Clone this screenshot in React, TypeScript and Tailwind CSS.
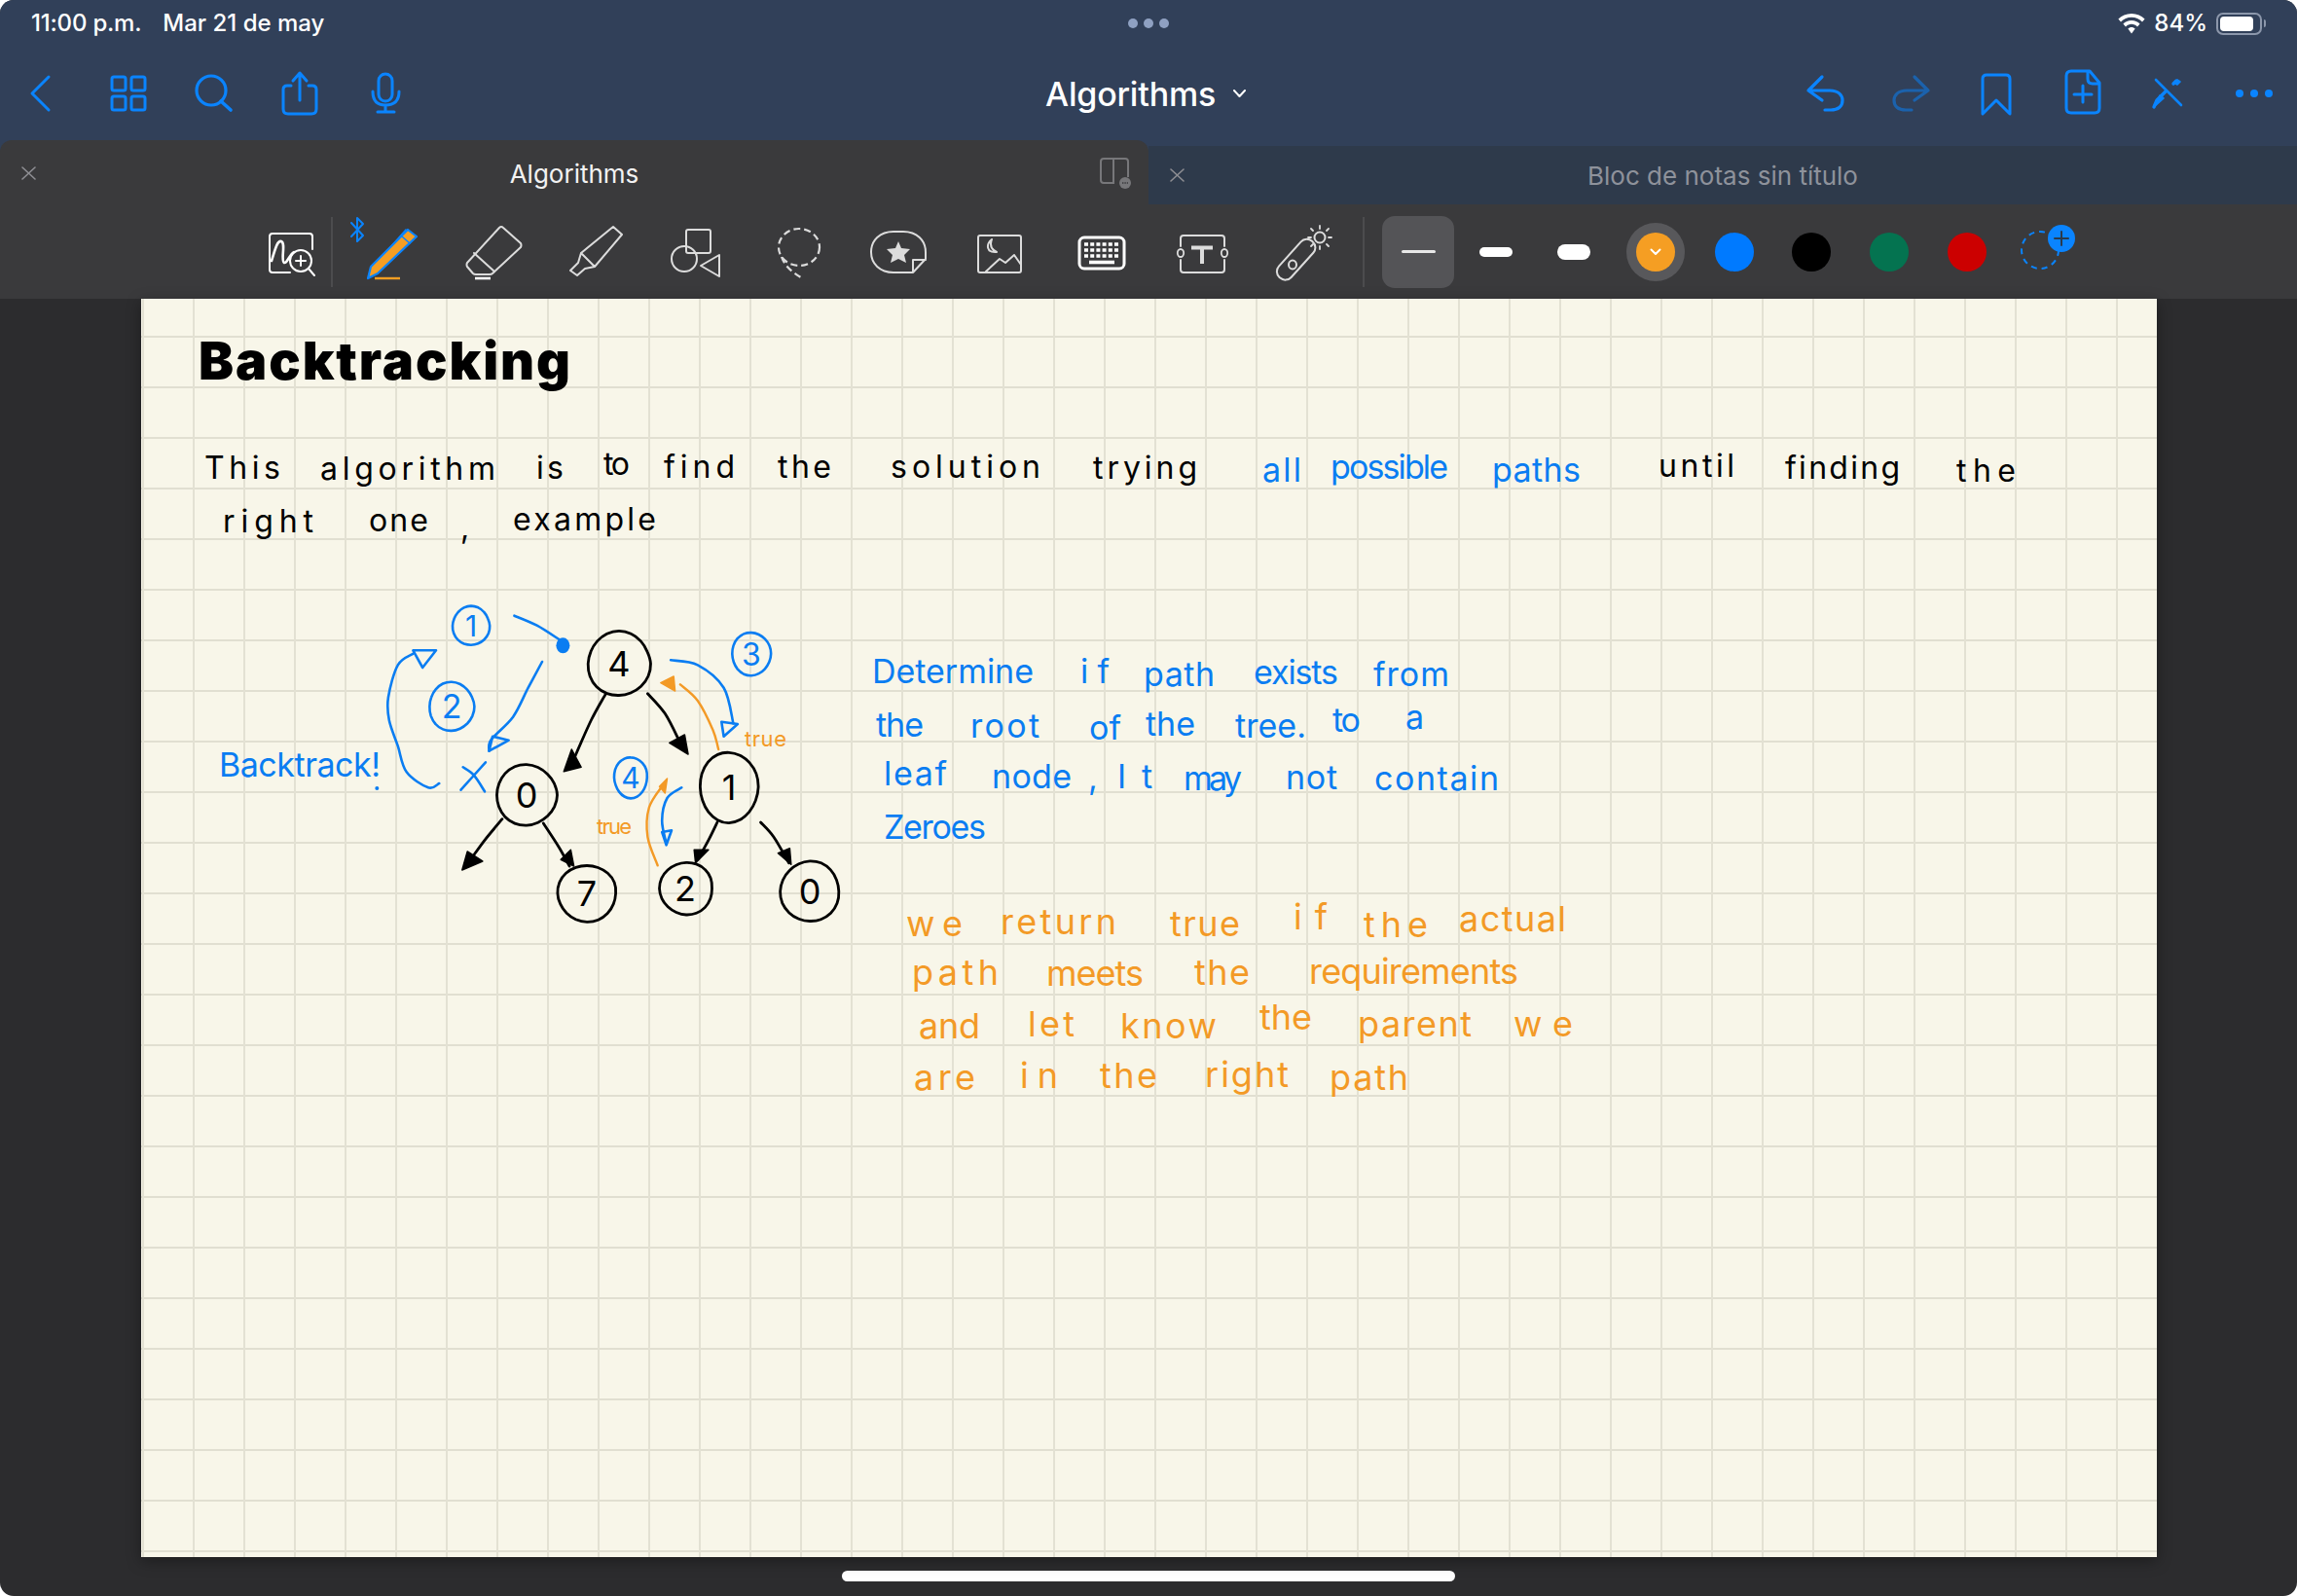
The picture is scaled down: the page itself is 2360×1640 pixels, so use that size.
import React from "react";

const BLUE = "#0a84ff";
const INK_BLUE = "#0a7df2";
const INK_ORANGE = "#f39a26";
const LIGHT = "#dcdcdc";

type Pt = [number, number];
const Z = (X: number, Y: number): Pt => [190 + X / 2.24, 600 + Y / 3];
const zp = (a: number[][]): Pt[] => a.map(([x, y]) => Z(x, y));

function smooth(pts: Pt[], closed = false): string {
  const n = pts.length;
  const g = (i: number) => (closed ? pts[(i + n) % n] : pts[Math.max(0, Math.min(n - 1, i))]);
  let d = `M${pts[0][0].toFixed(1)} ${pts[0][1].toFixed(1)}`;
  const last = closed ? n : n - 1;
  for (let i = 0; i < last; i++) {
    const p0 = g(i - 1), p1 = g(i), p2 = g(i + 1), p3 = g(i + 2);
    const c1 = [p1[0] + (p2[0] - p0[0]) / 6, p1[1] + (p2[1] - p0[1]) / 6];
    const c2 = [p2[0] - (p3[0] - p1[0]) / 6, p2[1] - (p3[1] - p1[1]) / 6];
    d += `C${c1[0].toFixed(1)} ${c1[1].toFixed(1)} ${c2[0].toFixed(1)} ${c2[1].toFixed(1)} ${p2[0].toFixed(1)} ${p2[1].toFixed(1)}`;
  }
  return d + (closed ? "Z" : "");
}

function blob(cx: number, cy: number, rx: number, ry: number, seed: number): string {
  const pts: Pt[] = [];
  for (let i = 0; i < 16; i++) {
    const a = (i / 16) * Math.PI * 2;
    const w = 1 + Math.sin(i * 1.1 + seed) * 0.018;
    pts.push([cx + Math.cos(a) * rx * w, cy + Math.sin(a) * ry * w]);
  }
  return smooth(pts, true);
}

type Word = [string, number, number, number];

const BLACK_WORDS: Word[] = [
  ["This", 210, 288, 492],
  ["algorithm", 329, 509, 493],
  ["is", 551, 579, 492],
  ["to", 620, 647, 488],
  ["find", 682, 755, 491],
  ["the", 799, 854, 491],
  ["solution", 915, 1069, 491],
  ["trying", 1123, 1230, 492],
  ["until", 1704, 1782, 490],
  ["finding", 1834, 1952, 492],
  ["the", 2010, 2071, 495],
  ["right", 229, 322, 547],
  ["one", 379, 440, 546],
  [",", 473, 481, 553],
  ["example", 527, 674, 545],
];
const BLUE_WORDS: Word[] = [
  ["all", 1297, 1337, 495],
  ["possible", 1367, 1488, 492],
  ["paths", 1533, 1624, 495],
  ["Determine", 896, 1062, 702],
  ["if", 1110, 1140, 702],
  ["path", 1175, 1248, 705],
  ["exists", 1288, 1375, 703],
  ["from", 1411, 1489, 705],
  ["the", 900, 949, 757],
  ["root", 997, 1068, 758],
  ["of", 1119, 1152, 760],
  ["the", 1177, 1228, 756],
  ["tree.", 1269, 1342, 758],
  ["to", 1369, 1398, 752],
  ["a", 1444, 1466, 749],
  ["leaf", 908, 973, 807],
  ["node", 1019, 1101, 810],
  [",", 1118, 1125, 811],
  ["It", 1148, 1184, 810],
  ["may", 1216, 1276, 812],
  ["not", 1321, 1374, 811],
  ["contain", 1412, 1540, 812],
  ["Zeroes", 908, 1013, 862],
  ["Backtrack!", 225, 391, 798],
];
const ORANGE_WORDS: Word[] = [
  ["we", 931, 989, 962],
  ["return", 1028, 1147, 960],
  ["true", 1202, 1274, 962],
  ["if", 1329, 1364, 955],
  ["the", 1401, 1467, 963],
  ["actual", 1499, 1609, 957],
  ["path", 937, 1026, 1012],
  ["meets", 1075, 1175, 1013],
  ["the", 1227, 1284, 1012],
  ["requirements", 1345, 1560, 1011],
  ["and", 944, 1007, 1067],
  ["let", 1056, 1104, 1065],
  ["know", 1151, 1250, 1067],
  ["the", 1294, 1348, 1058],
  ["parent", 1395, 1512, 1065],
  ["we", 1555, 1616, 1065],
  ["are", 939, 1002, 1120],
  ["in", 1048, 1087, 1118],
  ["the", 1130, 1189, 1118],
  ["right", 1238, 1324, 1117],
  ["path", 1366, 1447, 1120],
];

function Words({ words, fill, size }: { words: Word[]; fill: string; size: number }) {
  return (
    <>
      {words.map(([t, x0, x1, y], i) => (
        <text key={i} x={x0} y={y} fill={fill} fontSize={size} fontWeight={400} textLength={x1 - x0} lengthAdjust="spacing">
          {t}
        </text>
      ))}
    </>
  );
}

function Digit({ t, x, y, fill, size = 36 }: { t: string; x: number; y: number; fill: string; size?: number }) {
  return (
    <text x={x} y={y} fill={fill} fontSize={size} fontWeight={400} textAnchor="middle">
      {t}
    </text>
  );
}

const BLUE_LINES = [
  [[758, 98], [810, 128], [862, 172]],
  [[822, 240], [790, 320], [755, 410], [705, 480], [700, 515]],
  [[585, 615], [560, 628], [510, 580], [490, 500], [470, 420], [468, 350], [490, 250], [525, 215]],
  [[635, 635], [692, 550]],
  [[640, 565], [665, 590], [690, 640]],
  [[1118, 235], [1180, 250], [1240, 320], [1262, 430]],
  [[1143, 628], [1110, 660], [1098, 730], [1108, 800]],
];
const BLUE_HEADS = [
  [[700, 515], [745, 482], [708, 470]],
  [[525, 205], [578, 205], [547, 258]],
  [[1240, 470], [1272, 432], [1235, 425]],
  [[1098, 765], [1108, 805], [1120, 760]],
];
const ORANGE_LINES = [
  [[1228, 510], [1215, 450], [1180, 360], [1140, 310]],
  [[1088, 868], [1065, 780], [1068, 690], [1100, 620]],
];
const ORANGE_HEADS = [
  [[1095, 305], [1125, 285], [1128, 330]],
  [[1092, 625], [1110, 600], [1105, 645]],
];
const BLACK_LINES = [
  [[968, 340], [935, 420], [895, 540]],
  [[1065, 338], [1105, 400], [1140, 490]],
  [[730, 725], [690, 790], [660, 845]],
  [[825, 738], [860, 810], [885, 870]],
  [[1225, 735], [1205, 790], [1180, 850]],
  [[1325, 735], [1355, 780], [1390, 860]],
];
const BLACK_HEADS = [
  [[872, 578], [890, 510], [912, 565]],
  [[1115, 490], [1150, 465], [1158, 525]],
  [[638, 882], [650, 825], [685, 855]],
  [[865, 850], [888, 820], [895, 870]],
  [[1172, 820], [1205, 820], [1175, 860]],
  [[1365, 830], [1392, 815], [1395, 865]],
];

const triangle = (h: number[][]) => zp(h).map((p) => p.map((v) => v.toFixed(1)).join(",")).join(" ");

function Ink() {
  return (
    <svg className="absolute inset-0" width={2071} height={1293} viewBox="145 307 2071 1293" fontFamily="Inter, sans-serif">
      <text x={204} y={390} fill="#000" fontSize={54} fontWeight={900} textLength={382} lengthAdjust="spacing">
        Backtracking
      </text>
      <Words words={BLACK_WORDS} fill="#000" size={32} />
      <Words words={BLUE_WORDS} fill={INK_BLUE} size={34} />
      <Words words={ORANGE_WORDS} fill={INK_ORANGE} size={36} />

      <g fill="none" stroke="#000" strokeWidth={2.8} strokeLinecap="round">
        <path d={blob(636, 682, 32, 33, 1)} />
        <path d={blob(541, 817, 31, 31, 2)} />
        <path d={blob(749, 809, 30, 36, 3)} />
        <path d={blob(603, 918, 30, 29, 4)} />
        <path d={blob(705, 913, 27, 27, 5)} />
        <path d={blob(832, 916, 30, 31, 6)} />
        {BLACK_LINES.map((l, i) => (
          <path key={i} d={smooth(zp(l))} />
        ))}
      </g>
      {BLACK_HEADS.map((h, i) => (
        <polygon key={i} points={triangle(h)} fill="#000" stroke="#000" strokeWidth={1.5} strokeLinejoin="round" />
      ))}
      <Digit t="4" x={636} y={695} fill="#000" />
      <Digit t="0" x={541} y={830} fill="#000" />
      <Digit t="1" x={749} y={822} fill="#000" />
      <Digit t="7" x={603} y={931} fill="#000" />
      <Digit t="2" x={704} y={926} fill="#000" />
      <Digit t="0" x={832} y={929} fill="#000" />

      <g fill="none" stroke={INK_BLUE} strokeWidth={2.6} strokeLinecap="round">
        <path d={blob(484, 643, 19, 20, 7)} />
        <path d={blob(464, 726, 23, 25, 8)} />
        <path d={blob(772, 672, 20, 22, 9)} />
        <path d={blob(648, 799, 17, 21, 10)} />
        {BLUE_LINES.map((l, i) => (
          <path key={i} d={smooth(zp(l))} />
        ))}
        {BLUE_HEADS.map((h, i) => (
          <polygon key={i} points={triangle(h)} strokeLinejoin="round" />
        ))}
      </g>
      <ellipse cx={Z(870, 190)[0]} cy={Z(870, 190)[1]} rx={7} ry={8} fill={INK_BLUE} />
      <circle cx={Z(442, 630)[0]} cy={Z(442, 630)[1]} r={2} fill={INK_BLUE} />
      <Digit t="1" x={484} y={654} fill={INK_BLUE} size={30} />
      <Digit t="2" x={464} y={738} fill={INK_BLUE} size={34} />
      <Digit t="3" x={772} y={684} fill={INK_BLUE} size={32} />
      <Digit t="4" x={648} y={810} fill={INK_BLUE} size={30} />

      <g fill="none" stroke={INK_ORANGE} strokeWidth={2.4} strokeLinecap="round">
        {ORANGE_LINES.map((l, i) => (
          <path key={i} d={smooth(zp(l))} />
        ))}
      </g>
      {ORANGE_HEADS.map((h, i) => (
        <polygon key={i} points={triangle(h)} fill={INK_ORANGE} stroke={INK_ORANGE} strokeWidth={1.5} strokeLinejoin="round" />
      ))}
      <text x={765} y={767} fill={INK_ORANGE} fontSize={22} textLength={43} lengthAdjust="spacing">true</text>
      <text x={613} y={857} fill={INK_ORANGE} fontSize={22} textLength={36} lengthAdjust="spacing">true</text>
    </svg>
  );
}

/* Icons drawn in screen coordinates: a box over [x, x+w] inside a row of known top and height. */
function Box({ x, w, top, h, children, className = "" }: { x: number; w: number; top: number; h: number; children: React.ReactNode; className?: string }) {
  return (
    <svg width={w} height={h} viewBox={`${x} ${top} ${w} ${h}`} className={`shrink-0 overflow-visible ${className}`} fill="none" strokeLinecap="round" strokeLinejoin="round">
      {children}
    </svg>
  );
}

const Nav = (p: { x: number; w: number; children: React.ReactNode; className?: string }) => <Box {...p} top={48} h={96} />;
const Tool = (p: { x: number; w: number; children: React.ReactNode; className?: string }) => <Box {...p} top={210} h={97} />;

function NavLeft() {
  return (
    <div className="flex items-center pl-[32px]">
      <Nav x={32} w={19}>
        <path d="M50 79 L33 96 L50 113" stroke={BLUE} strokeWidth={3} />
      </Nav>
      <Nav x={114} w={36} className="ml-[63px]">
        <g stroke={BLUE} strokeWidth={3}>
          <rect x={115} y={79} width={14} height={14} rx={2} />
          <rect x={135} y={79} width={14} height={14} rx={2} />
          <rect x={115} y={99} width={14} height={14} rx={2} />
          <rect x={135} y={99} width={14} height={14} rx={2} />
        </g>
      </Nav>
      <Nav x={200} w={38} className="ml-[50px]">
        <circle cx={217} cy={93} r={15} stroke={BLUE} strokeWidth={3.2} />
        <path d="M227 104 L237 113" stroke={BLUE} strokeWidth={3.6} />
      </Nav>
      <Nav x={290} w={36} className="ml-[52px]">
        <path d="M299 88 H295 Q291 88 291 92 V112 Q291 117 296 117 H320 Q325 117 325 112 V92 Q325 88 321 88 H317" stroke={BLUE} strokeWidth={3} />
        <path d="M308 103 V76 M301 83 L308 75 L315 83" stroke={BLUE} strokeWidth={3} />
      </Nav>
      <Nav x={382} w={29} className="ml-[56px]">
        <rect x={389} y={76} width={14} height={28} rx={7} stroke={BLUE} strokeWidth={3} />
        <path d="M383 94 Q383 108 396 108 Q410 108 410 94 M396 108 V115 M388 115 H405" stroke={BLUE} strokeWidth={3} />
      </Nav>
    </div>
  );
}

function NavRight() {
  const dim = "#1b62ad";
  return (
    <div className="flex items-center justify-end pr-[25px]">
      <Nav x={1858} w={37}>
        <path d="M1873 79 L1859 93 L1873 103 M1859 93 H1881 C1890 93 1894 98 1894 103 C1894 109 1890 113 1882 113 H1876" stroke={BLUE} strokeWidth={3.2} />
      </Nav>
      <Nav x={1946} w={37} className="ml-[51px]">
        <path d="M1968 79 L1982 93 L1968 103 M1982 93 H1960 C1951 93 1947 98 1947 103 C1947 109 1951 113 1959 113 H1965" stroke={dim} strokeWidth={3.2} />
      </Nav>
      <Nav x={2037} w={30} className="ml-[54px]">
        <path d="M2038 117 V81 Q2038 77 2042 77 H2062 Q2066 77 2066 81 V117 L2052 103 Z" stroke={BLUE} strokeWidth={3} />
      </Nav>
      <Nav x={2123} w={36} className="ml-[56px]">
        <path d="M2148 73 H2129 Q2124 73 2124 78 V111 Q2124 116 2129 116 H2153 Q2158 116 2158 111 V85 Z M2146 74 V81 Q2146 86 2151 86 H2157" stroke={BLUE} strokeWidth={3} />
        <path d="M2141 88 V105 M2132 97 H2150" stroke={BLUE} strokeWidth={3} />
      </Nav>
      <Nav x={2212} w={32} className="ml-[53px]">
        <path d="M2216 82 L2242 108" stroke={BLUE} strokeWidth={2.6} />
        <path d="M2214 110 L2217 103 L2226 94 M2234 86 L2237 83" stroke={BLUE} strokeWidth={3.4} />
        <path d="M2214 110 L2224 101 L2220 98 Z M2238 87 L2241 84 L2238 82 L2235 85 Z" fill={BLUE} stroke={BLUE} strokeWidth={1.6} />
      </Nav>
      <div className="ml-[54px] flex items-center gap-[7px]">
        <span className="h-[8px] w-[8px] rounded-full bg-[#0a84ff]" />
        <span className="h-[8px] w-[8px] rounded-full bg-[#0a84ff]" />
        <span className="h-[8px] w-[8px] rounded-full bg-[#0a84ff]" />
      </div>
    </div>
  );
}

function Toolbar() {
  return (
    <div className="flex h-[97px] items-center bg-[#3a3a3c] pl-[276px]">
      <Tool x={276} w={47}>
        <path d="M298 280 H280 Q277 280 277 277 V243 Q277 240 280 240 H318 Q321 240 321 243 V256" stroke="#fff" strokeWidth={2} />
        <path d="M279 268 C283 255 285 247 289 248 C294 250 288 268 292 270 C295 271 297 262 302 259" stroke="#fff" strokeWidth={2.6} />
        <circle cx={309} cy={268} r={11} stroke="#fff" strokeWidth={2} />
        <path d="M309 263 V273 M304 268 H314 M317 276 L323 283" stroke="#fff" strokeWidth={2} />
      </Tool>
      <span className="ml-[17px] h-[72px] w-[2px] bg-[#4c4c4e]" />
      <Tool x={360} w={68} className="ml-[18px]">
        <path d="M361 229 L373 242 L367 248 V224 L373 230 L361 243" stroke={BLUE} strokeWidth={2} />
        <path d="M378 286 L381 274 L419 236 L428 243 L388 281 Z" fill="#f59e23" stroke={BLUE} strokeWidth={2.2} />
        <path d="M403 252 L417 236 M413 243 L421 250" stroke={BLUE} strokeWidth={1.6} />
        <path d="M385 286 H411" stroke="#f59e23" strokeWidth={2.4} strokeLinecap="butt" />
      </Tool>
      <Tool x={479} w={57} className="ml-[51px]">
        <path d="M513 234 Q515 232 517 234 L535 250 Q536 252 535 254 L506 281 Q505 282 503 282 H489 Q487 282 486 281 L480 274 Q479 272 480 270 Z" stroke={LIGHT} strokeWidth={2} />
        <path d="M487 260 L508 279" stroke={LIGHT} strokeWidth={2} />
        <path d="M488 286 H504" stroke="#fff" strokeWidth={2.6} strokeLinecap="butt" />
      </Tool>
      <Tool x={585} w={55} className="ml-[49px]">
        <path d="M630 233 L639 241 L611 274 L597 260 Z M597 260 L594 270 L586 278 L593 283 L601 276 L611 274" stroke={LIGHT} strokeWidth={2} />
      </Tool>
      <Tool x={689} w={51} className="ml-[49px]">
        <rect x={705} y={236} width={25} height={24} rx={2} stroke={LIGHT} strokeWidth={2} />
        <circle cx={703} cy={266} r={13} stroke={LIGHT} strokeWidth={2} />
        <path d="M739 262 L720 273 L739 284 Z" stroke={LIGHT} strokeWidth={2} />
      </Tool>
      <Tool x={797} w={46} className="ml-[57px]">
        <ellipse cx={821} cy={254} rx={21} ry={19} stroke={LIGHT} strokeWidth={2.2} strokeDasharray="7 4" strokeLinecap="butt" />
        <path d="M803 264 Q807 276 823 285" stroke={LIGHT} strokeWidth={2.2} strokeDasharray="7 4" strokeLinecap="butt" />
      </Tool>
      <Tool x={894} w={58} className="ml-[51px]">
        <path d="M938 280 H918 C904 280 895 271 895 259 C895 247 904 238 918 238 H928 C942 238 951 247 951 259 V266 Z M938 280 V267 H951" stroke={LIGHT} strokeWidth={2} />
        <path d="M923 248 L926 255 L935 256 L929 262 L931 270 L923 266 L915 270 L917 262 L911 256 L920 255 Z" fill={LIGHT} />
      </Tool>
      <Tool x={1004} w={46} className="ml-[52px]">
        <rect x={1005} y={242} width={44} height={38} rx={2} stroke={LIGHT} strokeWidth={2} />
        <path d="M1019 246 C1013 251 1013 260 1024 259 C1018 256 1017 251 1019 246 Z" stroke={LIGHT} strokeWidth={2} />
        <path d="M1013 279 L1027 266 L1033 270 L1042 262 L1049 272" stroke={LIGHT} strokeWidth={2} />
      </Tool>
      <Tool x={1108} w={48} className="ml-[58px]">
        <rect x={1109} y={244} width={46} height={32} rx={5} stroke="#fff" strokeWidth={3} />
        <path d="M1114 251 H1150 M1114 257 H1150 M1114 263 H1150" stroke="#fff" strokeWidth={3.6} strokeDasharray="4 2.2" strokeLinecap="butt" />
        <path d="M1119 269.5 H1145" stroke="#fff" strokeWidth={3.6} strokeLinecap="butt" />
      </Tool>
      <Tool x={1209} w={53} className="ml-[53px]">
        <path d="M1213 253 V245 Q1213 242 1216 242 H1255 Q1258 242 1258 245 V253 M1213 267 V277 Q1213 280 1216 280 H1255 Q1258 280 1258 277 V267" stroke={LIGHT} strokeWidth={2} />
        <ellipse cx={1213} cy={260} rx={3.2} ry={4} stroke={LIGHT} strokeWidth={1.8} />
        <ellipse cx={1258} cy={260} rx={3.2} ry={4} stroke={LIGHT} strokeWidth={1.8} />
        <path d="M1224 254.5 H1246 M1235 254 V271" stroke={LIGHT} strokeWidth={4} strokeLinecap="butt" />
      </Tool>
      <Tool x={1312} w={58} className="ml-[50px]">
        <rect x={1307} y={258} width={50} height={17} rx={8} transform="rotate(-48 1332 267)" stroke={LIGHT} strokeWidth={2} />
        <ellipse cx={1328} cy={272} rx={4} ry={4.5} stroke={LIGHT} strokeWidth={2} />
        <circle cx={1356} cy={244} r={5.5} stroke={LIGHT} strokeWidth={2} />
        <path d="M1356 232 V235 M1356 253 V256 M1344 244 H1347 M1365 244 H1368 M1347 235 L1349 237 M1365 235 L1363 237 M1347 253 L1349 251 M1365 253 L1363 251" stroke={LIGHT} strokeWidth={1.8} />
      </Tool>
      <span className="ml-[30px] h-[72px] w-[2px] bg-[#4c4c4e]" />
      <div className="ml-[18px] flex h-[74px] w-[74px] items-center justify-center rounded-[13px] bg-[#545457]">
        <span className="h-[3px] w-[35px] rounded-full bg-[#e8e8e8]" />
      </div>
      <span className="ml-[26px] h-[10px] w-[34px] rounded-full bg-white" />
      <span className="ml-[46px] h-[16px] w-[34px] rounded-full bg-white" />
      <div className="ml-[37px] flex h-[60px] w-[60px] items-center justify-center rounded-full bg-[#58585b]">
        <div className="flex h-[40px] w-[40px] items-center justify-center rounded-full bg-[#f59e23]">
          <svg width={12} height={8} viewBox="0 0 12 8" fill="none">
            <path d="M1.5 1.5 L6 6 L10.5 1.5" stroke="#fff" strokeWidth={2} strokeLinecap="round" strokeLinejoin="round" />
          </svg>
        </div>
      </div>
      <span className="ml-[31px] h-[40px] w-[40px] rounded-full bg-[#007aff]" />
      <span className="ml-[39px] h-[40px] w-[40px] rounded-full bg-black" />
      <span className="ml-[40px] h-[40px] w-[40px] rounded-full bg-[#047350]" />
      <span className="ml-[40px] h-[40px] w-[40px] rounded-full bg-[#cc0000]" />
      <Tool x={2077} w={56} className="ml-[36px]">
        <circle cx={2096} cy={257} r={19} stroke={BLUE} strokeWidth={2} strokeDasharray="6 5" strokeLinecap="butt" />
        <circle cx={2118} cy={245} r={14} fill={BLUE} />
        <path d="M2118 238 V252 M2111 245 H2125" stroke="#2a3a4d" strokeWidth={2} />
      </Tool>
    </div>
  );
}

export default function App() {
  return (
    <div className="flex h-[1640px] w-[2360px] flex-col overflow-hidden rounded-[14px] bg-[#2c2c2e] font-['Inter',sans-serif]">
      <header className="h-[144px] bg-[#314059]">
        <div className="grid h-[48px] grid-cols-[1fr_auto_1fr] items-center px-[32px] text-[24px] font-medium text-white">
          <div className="flex gap-[22px]">
            <span className="tracking-[-0.2px]">11:00 p.m.</span>
            <span>Mar 21 de may</span>
          </div>
          <div className="flex gap-[6px]">
            <span className="h-[10px] w-[10px] rounded-full bg-[#8fa1c2]" />
            <span className="h-[10px] w-[10px] rounded-full bg-[#8fa1c2]" />
            <span className="h-[10px] w-[10px] rounded-full bg-[#8fa1c2]" />
          </div>
          <div className="flex items-center justify-end gap-[9px]">
            <svg width={28} height={21} viewBox="0 0 28 21" fill="#fff">
              <path d="M14 0 C8.5 0 3.8 2.2 0.4 5.6 L3 8.4 C5.8 5.6 9.7 3.8 14 3.8 C18.3 3.8 22.2 5.6 25 8.4 L27.6 5.6 C24.2 2.2 19.5 0 14 0 Z" />
              <path d="M14 7 C10.6 7 7.6 8.4 5.4 10.6 L8 13.4 C9.6 11.8 11.7 10.8 14 10.8 C16.3 10.8 18.4 11.8 20 13.4 L22.6 10.6 C20.4 8.4 17.4 7 14 7 Z" />
              <path d="M14 14 C12.6 14 11.3 14.6 10.3 15.6 L14 20.5 L17.7 15.6 C16.7 14.6 15.4 14 14 14 Z" />
            </svg>
            <span>84%</span>
            <div className="flex items-center gap-[2px]">
              <div className="flex h-[23px] w-[47px] items-center rounded-[7px] border-2 border-[#8c97ab] p-[2px]">
                <div className="h-full w-[34px] rounded-[4px] bg-white" />
              </div>
              <span className="h-[8px] w-[2px] rounded-r-full bg-[#8c97ab]" />
            </div>
          </div>
        </div>
        <div className="grid h-[96px] grid-cols-[1fr_auto_1fr] items-center">
          <NavLeft />
          <div className="flex items-center gap-[18px] pr-[6px] text-[34px] font-medium tracking-[-0.2px] text-white">
            <span>Algorithms</span>
            <svg width={13} height={8} viewBox="0 0 13 8" fill="none">
              <path d="M1 1 L6.5 7 L12 1" stroke="#fff" strokeWidth={2} strokeLinecap="round" strokeLinejoin="round" />
            </svg>
          </div>
          <NavRight />
        </div>
      </header>

      <div className="flex h-[66px] items-end bg-[#314059]">
        <div className="grid h-[66px] w-[1180px] grid-cols-[1fr_auto_1fr] items-center rounded-t-[12px] bg-[#3a3a3c] px-[22px] pt-[2px]">
          <svg width={15} height={14} viewBox="0 0 15 14" fill="none">
            <path d="M1 1 L14 13 M14 1 L1 13" stroke="#8e8e93" strokeWidth={1.6} strokeLinecap="round" />
          </svg>
          <span className="text-[26px] text-[#f2f2f2]">Algorithms</span>
          <div className="mr-[-4px] flex justify-end">
            <svg width={32} height={32} viewBox="0 0 32 32" fill="none">
              <path d="M14 1 H4 Q1 1 1 4 V23 Q1 26 4 26 H14 Z M14 1 H26 Q29 1 29 4 V20" stroke="#77777a" strokeWidth={2} />
              <circle cx={26} cy={26} r={6} fill="#77777a" />
              <path d="M23 26 H29" stroke="#3a3a3c" strokeWidth={1.6} strokeDasharray="1.4 1" />
            </svg>
          </div>
        </div>
        <div className="grid h-[60px] flex-1 grid-cols-[1fr_auto_1fr] items-center bg-[#2e3a4b] px-[22px]">
          <svg width={15} height={14} viewBox="0 0 15 14" fill="none">
            <path d="M1 1 L14 13 M14 1 L1 13" stroke="#8e8e93" strokeWidth={1.6} strokeLinecap="round" />
          </svg>
          <span className="text-[26px] text-[#8e929b]">Bloc de notas sin título</span>
          <span />
        </div>
      </div>

      <Toolbar />

      <main className="flex flex-1 flex-col items-center">
        <div className="relative h-[1293px] w-[2071px] shrink-0 overflow-hidden bg-[#f8f6e9] bg-[linear-gradient(to_right,#e3e1d3_2px,transparent_2px),linear-gradient(to_bottom,#e1dfd1_2.5px,transparent_2.5px)] bg-size-[52px_52px] bg-position-[1px_38px] shadow-[0_4px_14px_rgba(0,0,0,0.35)]">
          <Ink />
        </div>
        <div className="mt-[14px] h-[11px] w-[630px] rounded-full bg-white" />
      </main>
    </div>
  );
}
